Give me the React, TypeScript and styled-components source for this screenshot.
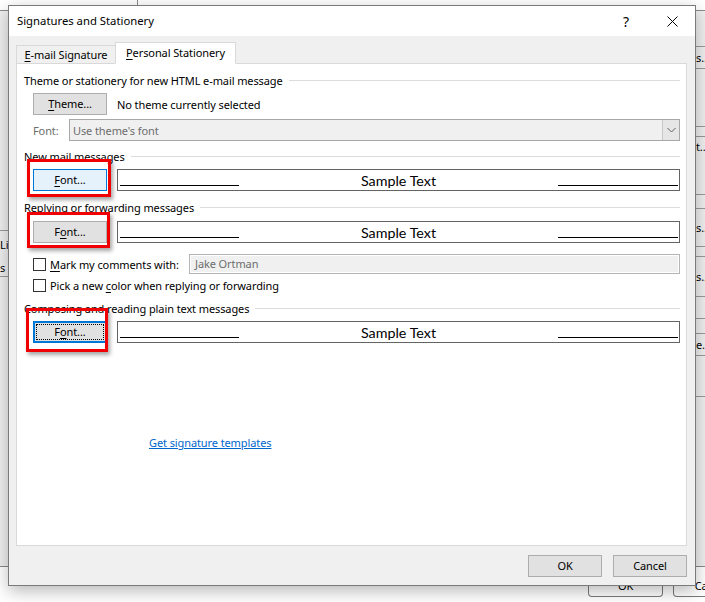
import styled, { createGlobalStyle } from 'styled-components';

const GlobalStyle = createGlobalStyle`
  html, body {
    margin: 0;
    padding: 0;
    background: #fff;
  }
  body {
    font-family: "Noto Sans", "Segoe UI", sans-serif;
    font-size: 11px;
    letter-spacing: -0.1px;
    color: #000;
  }
`;

const Desktop = styled.div`
  position: relative;
  width: 705px;
  height: 602px;
  overflow: hidden;
  background: #fff;
`;

/* window sitting behind the dialog, only its edges show */
const BackWindow = styled.div`
  position: absolute;
  left: 0;
  top: 0;
  width: 705px;
  height: 598px;
  display: flex;
  flex-direction: column;
`;

const BackTop = styled.div`
  height: 10px;
  flex: none;
  border-bottom: 1px solid #8a8a8a;
  display: flex;
  & > span {
    width: 137px;
    border-right: 1px solid #8a8a8a;
  }
`;

const BackMain = styled.div`
  flex: 1;
  display: flex;
  justify-content: space-between;
  background: #f0f0f0;
  border-bottom: 1px solid #8a8a8a;
`;

const BackSide = styled.div`
  width: 9px;
  display: flex;
  flex-direction: column;
  overflow: hidden;
`;

const BackCell = styled.div<{ $h: number; $line?: boolean }>`
  height: ${(p) => p.$h}px;
  flex: none;
  box-sizing: border-box;
  border-bottom: ${(p) => (p.$line ? '1px solid #9a9a9a' : 'none')};
  line-height: ${(p) => p.$h}px;
  white-space: nowrap;
`;

const BackFooter = styled.div`
  height: 31px;
  flex: none;
  display: flex;
  justify-content: flex-end;
  gap: 10px;
  margin-right: -45px;
`;

const BackButton = styled.div<{ $w: number }>`
  width: ${(p) => p.$w}px;
  height: 30px;
  box-sizing: border-box;
  border: 1px solid #7a7a7a;
  border-top: none;
  border-radius: 0 0 4px 4px;
  text-align: center;
  padding-top: 12px;
  line-height: 14px;
  overflow: hidden;
`;

const Dialog = styled.div`
  position: absolute;
  left: 8px;
  top: 5px;
  width: 688px;
  height: 581px;
  box-sizing: border-box;
  border: 1px solid #7a7a7a;
  background: #f0f0f0;
  box-shadow: 0 5px 16px rgba(0, 0, 0, 0.28);
  display: flex;
  flex-direction: column;
`;

const TitleBar = styled.div`
  height: 30px;
  flex: none;
  background: #fff;
  display: flex;
  align-items: center;
  padding-left: 8px;
`;

const Title = styled.div`
  flex: 1;
  font-size: 11.3px;
  letter-spacing: 0;
  padding-bottom: 1px;
`;

const CaptionButton = styled.div`
  width: 46px;
  height: 30px;
  display: flex;
  align-items: center;
  justify-content: center;
  font-size: 14px;
`;

const Body = styled.div`
  flex: 1;
  display: flex;
  flex-direction: column;
  padding: 0 8px 8px 7px;
`;

const TabRow = styled.div`
  height: 28px;
  flex: none;
  display: flex;
  align-items: flex-end;
  margin-bottom: -1px;
  position: relative;
  z-index: 1;
`;

const Tab = styled.div<{ $active?: boolean; $w: number }>`
  width: ${(p) => p.$w}px;
  height: ${(p) => (p.$active ? 22 : 19)}px;
  box-sizing: border-box;
  border: 1px solid #d9d9d9;
  border-bottom: ${(p) => (p.$active ? '1px solid #fff' : '1px solid #d9d9d9')};
  border-right: ${(p) => (p.$active ? '1px solid #d9d9d9' : 'none')};
  background: ${(p) => (p.$active ? '#fff' : '#f0f0f0')};
  text-align: center;
  line-height: ${(p) => (p.$active ? 20 : 18)}px;
  white-space: nowrap;
`;

const Panel = styled.div`
  flex: 1;
  box-sizing: border-box;
  border: 1px solid #d9d9d9;
  background: #fff;
  padding: 8px 6px 0 7px;
  display: flex;
  flex-direction: column;
`;

const GroupHeader = styled.div<{ $mt: number }>`
  height: 16px;
  margin-top: ${(p) => p.$mt}px;
  display: flex;
  align-items: center;
  gap: 6px;
  white-space: nowrap;
  &::after {
    content: '';
    flex: 1;
    height: 1px;
    background: #dcdcdc;
  }
`;

const Row = styled.div<{ $mt: number; $h?: number }>`
  margin-top: ${(p) => p.$mt}px;
  margin-left: 9px;
  height: ${(p) => p.$h ?? 22}px;
  display: flex;
  align-items: center;
  white-space: nowrap;
`;

const Button = styled.button<{ $state?: 'hover' | 'focus' }>`
  position: relative;
  width: 74px;
  height: 22px;
  flex: none;
  box-sizing: border-box;
  margin: 0;
  padding: 0 0 1px;
  font: inherit;
  letter-spacing: inherit;
  color: #000;
  background: ${(p) => (p.$state === 'hover' ? '#e5f1fb' : '#e1e1e1')};
  border: ${(p) =>
    p.$state === 'focus'
      ? '2px solid #0078d7'
      : p.$state === 'hover'
        ? '1px solid #0078d7'
        : '1px solid #adadad'};
  &::after {
    content: '';
    display: ${(p) => (p.$state === 'focus' ? 'block' : 'none')};
    position: absolute;
    inset: 1px;
    border: 1px dotted #000;
  }
`;

const Note = styled.span`
  margin-left: 10px;
`;

const DimLabel = styled.span`
  color: #6d6d6d;
  width: 36px;
`;

const Combo = styled.div`
  width: 611px;
  height: 22px;
  box-sizing: border-box;
  border: 1px solid #a8a8a8;
  background: #f0f0f0;
  display: flex;
  align-items: center;
  color: #6d6d6d;
  padding-left: 3px;
`;

const ComboText = styled.span`
  flex: 1;
`;

const ComboArrow = styled.div`
  width: 17px;
  height: 20px;
  box-sizing: border-box;
  border-left: 1px solid #c8c8c8;
  background: #e6e6e6;
  display: flex;
  align-items: center;
  justify-content: center;
`;

const Slot = styled.div`
  position: relative;
  flex: none;
`;

const Highlight = styled.div<{ $l: number; $t: number; $w: number; $h: number }>`
  position: absolute;
  left: ${(p) => p.$l}px;
  top: ${(p) => p.$t}px;
  width: ${(p) => p.$w}px;
  height: ${(p) => p.$h}px;
  box-sizing: border-box;
  border: 3px solid #f00000;
  box-shadow: 2px 3px 4px rgba(0, 0, 0, 0.35);
  pointer-events: none;
  z-index: 2;
`;

const Sample = styled.div`
  margin-left: 10px;
  width: 563px;
  height: 22px;
  box-sizing: border-box;
  border: 1px solid #646464;
  background: #fff;
  display: grid;
  grid-template-columns: 119px 1fr 120px;
  padding: 0 1px 0 2px;
  font-family: Lato, "Noto Sans", sans-serif;
  font-size: 14.3px;
  letter-spacing: 0;
`;

const SampleLine = styled.span`
  align-self: end;
  height: 1px;
  margin-bottom: 4px;
  background: #000;
`;

const SampleText = styled.span`
  align-self: center;
  text-align: center;
  line-height: 18px;
  padding-top: 1px;
`;

const Check = styled.span`
  width: 13px;
  height: 13px;
  flex: none;
  box-sizing: border-box;
  border: 1px solid #333;
  background: #fff;
  margin-right: 4px;
`;

const TextField = styled.div`
  margin-left: auto;
  width: 491px;
  height: 20px;
  box-sizing: border-box;
  border: 1px solid #b4b4b4;
  box-shadow: inset 0 0 0 1px #fff;
  background: #f0f0f0;
  color: #6d6d6d;
  padding-left: 5px;
  line-height: 18px;
`;

const Link = styled.a`
  margin-top: 92px;
  margin-left: 125px;
  color: #0066cc;
  text-decoration: underline;
  line-height: 16px;
  align-self: flex-start;
`;

const Footer = styled.div`
  margin-top: 9px;
  display: flex;
  justify-content: flex-end;
  gap: 11px;
`;

const Key = styled.u`
  text-underline-offset: 2px;
`;

type FontRowProps = {
  mt: number;
  access: number;
  state?: 'hover' | 'focus';
  box: { l: number; t: number; w: number; h: number };
};

const FontRow = ({ mt, access, state, box }: FontRowProps) => {
  const word = 'Font';
  return (
    <Row $mt={mt}>
      <Slot>
        <Button $state={state}>
          {word.slice(0, access)}
          <Key>{word[access]}</Key>
          {word.slice(access + 1)}...
        </Button>
        <Highlight $l={box.l} $t={box.t} $w={box.w} $h={box.h} />
      </Slot>
      <Sample>
        <SampleLine />
        <SampleText>Sample Text</SampleText>
        <SampleLine />
      </Sample>
    </Row>
  );
};

const Chevron = () => (
  <svg width="9" height="6" viewBox="0 0 9 6">
    <path d="M0.5 1 L4.5 5 L8.5 1" fill="none" stroke="#606060" strokeWidth="1" />
  </svg>
);

const CloseIcon = () => (
  <svg width="11" height="11" viewBox="0 0 11 11">
    <path d="M0.5 0.5 L10.5 10.5 M10.5 0.5 L0.5 10.5" stroke="#000" strokeWidth="1" />
  </svg>
);

export default function App() {
  return (
    <Desktop>
      <GlobalStyle />
      <BackWindow>
        <BackTop>
          <span />
        </BackTop>
        <BackMain>
          <BackSide>
            <BackCell $h={220} $line />
            <BackCell $h={28}>Lib</BackCell>
            <BackCell $h={18} $line>
              s
            </BackCell>
          </BackSide>
          <BackSide>
            <BackCell $h={36} $line />
            <BackCell $h={22} $line>
              s..
            </BackCell>
            <BackCell $h={58} $line />
            <BackCell $h={10} $line />
            <BackCell $h={20}>t..</BackCell>
            <BackCell $h={38} $line />
            <BackCell $h={14} $line />
            <BackCell $h={38} $line>
              s..
            </BackCell>
            <BackCell $h={10} $line />
            <BackCell $h={40} $line>
              s..
            </BackCell>
            <BackCell $h={22} $line />
            <BackCell $h={15} $line />
            <BackCell $h={22} $line>
              e..
            </BackCell>
            <BackCell $h={41} $line />
          </BackSide>
        </BackMain>
        <BackFooter>
          <BackButton $w={75}>OK</BackButton>
          <BackButton $w={77}>Cancel</BackButton>
        </BackFooter>
      </BackWindow>

      <Dialog>
        <TitleBar>
          <Title>Signatures and Stationery</Title>
          <CaptionButton>?</CaptionButton>
          <CaptionButton>
            <CloseIcon />
          </CaptionButton>
        </TitleBar>
        <Body>
          <TabRow>
            <Tab $w={99}>
              <Key>E</Key>-mail Signature
            </Tab>
            <Tab $w={121} $active>
              <Key>P</Key>ersonal Stationery
            </Tab>
          </TabRow>
          <Panel>
            <GroupHeader $mt={0}>Theme or stationery for new HTML e-mail message</GroupHeader>
            <Row $mt={5}>
              <Button>
                <Key>T</Key>heme...
              </Button>
              <Note>No theme currently selected</Note>
            </Row>
            <Row $mt={4}>
              <DimLabel>Font:</DimLabel>
              <Combo>
                <ComboText>Use theme's font</ComboText>
                <ComboArrow>
                  <Chevron />
                </ComboArrow>
              </Combo>
            </Row>
            <GroupHeader $mt={7}>New mail messages</GroupHeader>
            <FontRow mt={5} access={0} state="hover" box={{ l: -6, t: -10, w: 84, h: 38 }} />
            <GroupHeader $mt={8}>Replying or forwarding messages</GroupHeader>
            <FontRow mt={6} access={1} box={{ l: -6, t: -9, w: 83, h: 36 }} />
            <Row $mt={11} $h={20}>
              <Check />
              <span>
                <Key>M</Key>ark my comments with:
              </span>
              <TextField>Jake Ortman</TextField>
            </Row>
            <Row $mt={3} $h={16}>
              <Check />
              <span>
                Pick a new <Key>c</Key>olor when replying or forwarding
              </span>
            </Row>
            <GroupHeader $mt={7}>Composing and reading plain text messages</GroupHeader>
            <FontRow mt={5} access={1} state="focus" box={{ l: -7, t: -13, w: 82, h: 44 }} />
            <Link>Get signature templates</Link>
          </Panel>
          <Footer>
            <Button>OK</Button>
            <Button>Cancel</Button>
          </Footer>
        </Body>
      </Dialog>
    </Desktop>
  );
}
